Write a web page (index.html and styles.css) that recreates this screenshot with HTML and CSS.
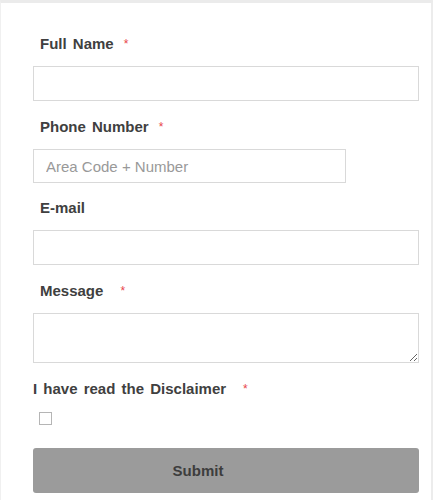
FILE: index.html
```html
<!DOCTYPE html>
<html lang="en">
<head>
    <meta charset="UTF-8">
    <meta name="viewport" content="width=device-width, initial-scale=1.0">
    <title>Contact</title>
    <link rel="stylesheet" href="styles.css">
</head>
<body>
    <div class="panel">
        <form class="contact-form">
            <div class="field">
                <label for="fullName">Full Name<span class="req">*</span></label>
                <input type="text" id="fullName" class="text-input">
            </div>
            <div class="field phone">
                <label for="phone">Phone Number<span class="req">*</span></label>
                <input type="text" id="phone" class="text-input short" placeholder="Area Code + Number">
            </div>
            <div class="field">
                <label for="email">E-mail</label>
                <input type="text" id="email" class="text-input">
            </div>
            <div class="field">
                <label for="message">Message<span class="req wide">*</span></label>
                <textarea id="message" class="text-input message"></textarea>
            </div>
            <div class="field disclaimer">
                <label for="agree">I have read the Disclaimer<span class="req wide">*</span></label>
                <input type="checkbox" id="agree" class="check">
            </div>
            <button type="submit" class="submit-button">Submit</button>
        </form>
    </div>
</body>
</html>
```

FILE: styles.css
```css
body {
    font-family: "Liberation Sans", Arial, sans-serif;
    margin: 0;
    background-color: #ffffff;
}

.panel {
    width: 430px;
    height: 497px;
    border-top: 3px solid #ebebeb;
    border-left: 1px solid #f0f0f0;
    border-right: 2px solid #ececec;
}

.contact-form {
    display: flex;
    flex-direction: column;
    padding: 32px 14px 0 32px;
}

.field {
    display: flex;
    flex-direction: column;
    margin-bottom: 17px;
}

.field.phone {
    margin-bottom: 16px;
}

.field label {
    font-size: 15px;
    line-height: 18px;
    font-weight: bold;
    color: #404040;
    word-spacing: 2px;
    margin-left: 7px;
    margin-bottom: 13px;
}

.req {
    color: #e8454a;
    font-size: 12px;
    font-weight: normal;
    vertical-align: top;
    margin-left: 10px;
}

.req.wide {
    margin-left: 17px;
}

.text-input {
    box-sizing: border-box;
    width: 386px;
    height: 35px;
    border: 1px solid #d9d9d9;
    padding: 0 12px;
    font-family: "Liberation Sans", Arial, sans-serif;
    font-size: 15px;
    color: #444444;
    margin: 0;
}

.text-input::placeholder {
    color: #999999;
}

.text-input.short {
    width: 313px;
    height: 34px;
}

.text-input.message {
    height: 50px;
    resize: vertical;
}

.disclaimer label {
    margin-left: 0;
    margin-bottom: 14px;
}

.disclaimer {
    margin-bottom: 23px;
}

.check {
    appearance: none;
    box-sizing: border-box;
    width: 13px;
    height: 13px;
    margin: 0 0 0 6px;
    border: 1px solid #b5b5b5;
    background-color: #ffffff;
}

.submit-button {
    width: 386px;
    height: 45px;
    background-color: #9b9b9b;
    border: none;
    border-radius: 3px;
    color: #3d3d3d;
    font-family: "Liberation Sans", Arial, sans-serif;
    font-size: 15px;
    font-weight: bold;
    padding: 0 56px 0 0;
    margin: 0;
}
```
